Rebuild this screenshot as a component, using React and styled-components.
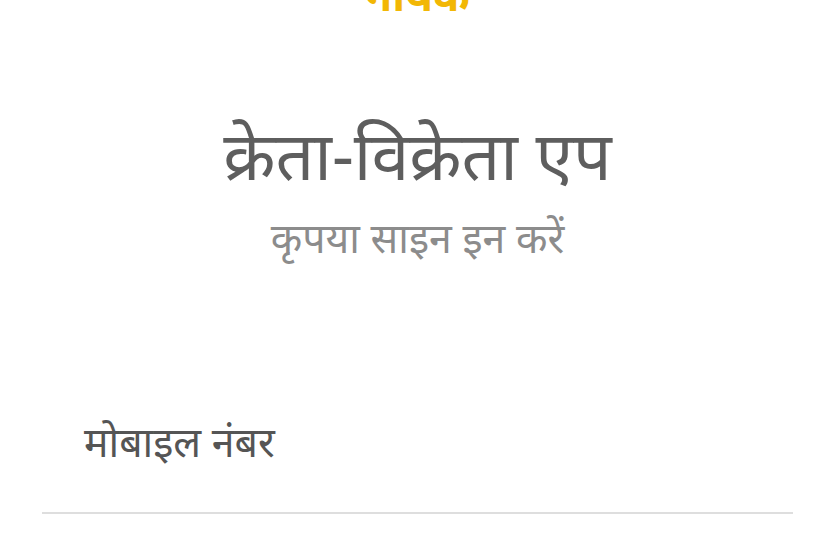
import React from 'react';
import styled, {createGlobalStyle} from 'styled-components';

const GlobalStyle = createGlobalStyle`
  html, body {
    margin: 0;
    padding: 0;
    background: #ffffff;
  }
  body {
    font-family: "Noto Sans", "Noto Sans Devanagari", sans-serif;
    overflow: hidden;
  }
`;

const Page = styled.div`
  width: 835px;
  height: 547px;
  overflow: hidden;
  display: flex;
  flex-direction: column;
  align-items: center;
`;

const Brand = styled.div`
  margin-top: -31px;
  height: 50px;
  font-size: 44px;
  font-weight: 700;
  line-height: 50px;
  color: #f2b705;
`;

const Title = styled.h1`
  margin: 95px 0 0;
  font-size: 68px;
  font-weight: 400;
  line-height: 80px;
  color: #5e5e5e;
`;

const Subtitle = styled.p`
  margin: 18px 0 0;
  font-size: 41px;
  line-height: 50px;
  color: #8c8c8c;
`;

const Form = styled.form`
  align-self: stretch;
  margin: 151px 42px 0;
`;

const Field = styled.label`
  display: block;
  padding: 0 0 43px 42px;
  border-bottom: 2px solid #dedede;
  font-size: 41px;
  line-height: 56px;
  color: #555555;
`;

const App = () => {
  return (
    <Page>
      <GlobalStyle />
      <Brand>नायक</Brand>
      <Title>क्रेता-विक्रेता एप</Title>
      <Subtitle>कृपया साइन इन करें</Subtitle>
      <Form>
        <Field>मोबाइल नंबर</Field>
      </Form>
    </Page>
  );
};

export default App;
